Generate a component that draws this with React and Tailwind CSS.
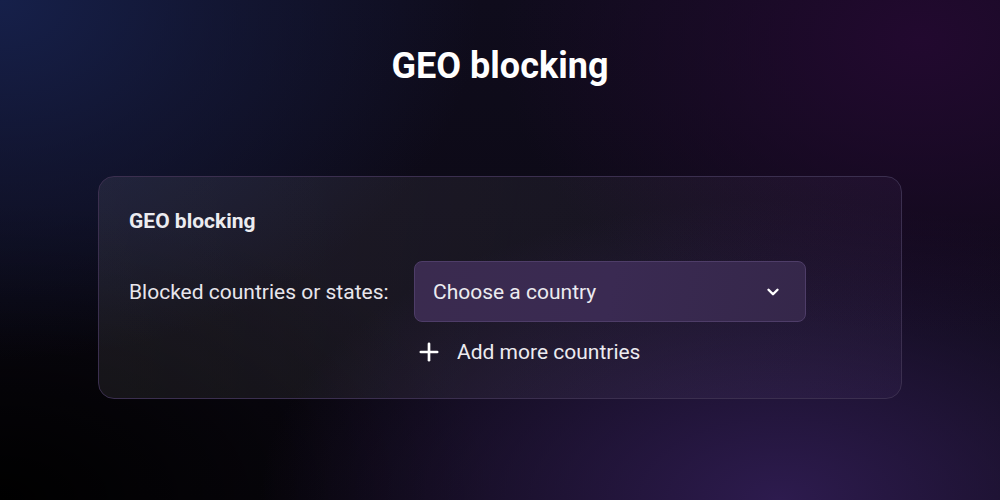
import React from 'react';
import { ChevronDown, Plus } from 'lucide-react';

export default function App() {
  return (
    <div
      className="w-[1000px] h-[500px] overflow-hidden text-white bg-[#0b0810] bg-[radial-gradient(ellipse_480px_360px_at_0%_0%,#16204a_0%,rgba(22,32,74,0.5)_45%,transparent_100%),radial-gradient(ellipse_420px_300px_at_92%_8%,#22092f_0%,transparent_100%),radial-gradient(ellipse_520px_300px_at_78%_100%,#2d1b4e_0%,rgba(43,26,74,0.6)_45%,transparent_100%),radial-gradient(ellipse_500px_300px_at_0%_100%,#000000_0%,transparent_100%),linear-gradient(180deg,#0f0c1c_0%,#0a0710_100%)]"
      style={{ fontFamily: 'Roboto, "Noto Sans", sans-serif' }}
    >
      <div className="flex flex-col items-center pt-[44px]">
        <h1 className="text-[36px] leading-[44px] font-bold">GEO blocking</h1>

        <div className="mt-[88px] w-[804px] rounded-[16px] border border-[#3b2f4f] bg-[linear-gradient(100deg,rgba(255,255,255,0.07)_0%,rgba(255,255,255,0.05)_50%,rgba(150,110,200,0.06)_100%)] pt-[30px] pb-[32px] pl-[30px]">
          <h2 className="text-[21px] leading-[28px] font-bold text-[#ececf0]">GEO blocking</h2>

          <div className="mt-[26px] flex items-center">
            <div className="w-[285px] text-[21px] leading-[28px] text-[#e8e6ec]">Blocked countries or states:</div>
            <div className="w-[392px] h-[61px] rounded-[8px] border border-[#4e3d68] bg-[linear-gradient(100deg,#3a2b4f_0%,#3a2a52_50%,#35274a_100%)] flex items-center justify-between pl-[18px] pr-[23px]">
              <span className="text-[21px] leading-[28px] text-[#ecebf0]">Choose a country</span>
              <ChevronDown size={18} strokeWidth={3.2} className="text-white" />
            </div>
          </div>

          <div className="mt-[16px] ml-[285px] flex items-center">
            <Plus size={28} strokeWidth={2.3} className="text-white ml-[1px]" />
            <span className="ml-[14px] text-[21px] leading-[28px] text-[#ecebf0]">Add more countries</span>
          </div>
        </div>
      </div>
    </div>
  );
}
